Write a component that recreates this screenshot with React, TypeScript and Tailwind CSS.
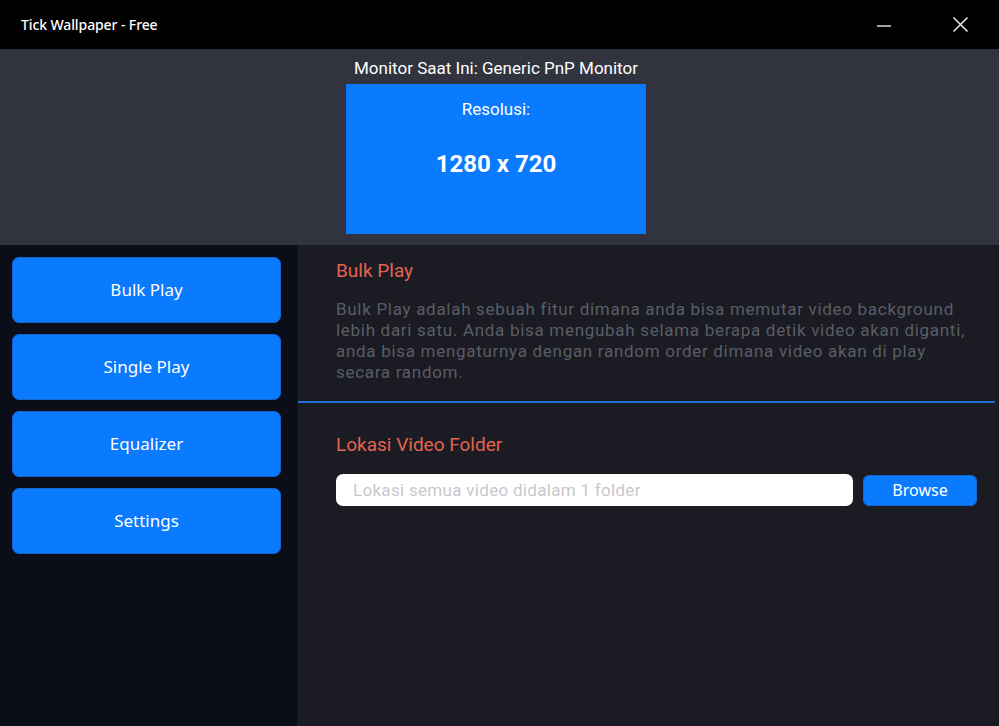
const menu = ["Bulk Play", "Single Play", "Equalizer", "Settings"];

const desc = [
  "Bulk Play adalah sebuah fitur dimana anda bisa memutar video background",
  "lebih dari satu. Anda bisa mengubah selama berapa detik video akan diganti,",
  "anda bisa mengaturnya dengan random order dimana video akan di play",
  "secara random.",
];

const App = () => {
  return (
    <div className="flex flex-col w-[999px] h-[726px] overflow-hidden bg-[#1a1b23] font-['Roboto',sans-serif]">
      <header className="flex items-center h-[49px] bg-black shrink-0">
        <span className="pl-[21px] text-[14px] font-medium text-white font-['Noto_Sans',sans-serif] tracking-[-0.1px]">
          Tick Wallpaper - Free
        </span>
        <div className="flex items-center ml-auto h-full mr-[1px]">
          <button className="flex items-center justify-center w-[76px] h-full">
            <svg width="16" height="16" viewBox="0 0 16 16">
              <path d="M1 9h14" stroke="#e5e5e5" strokeWidth="1.4" />
            </svg>
          </button>
          <button className="flex items-center justify-center w-[76px] h-full">
            <svg width="17" height="17" viewBox="0 0 17 17">
              <path d="M1.5 1.5l14 14M15.5 1.5l-14 14" stroke="#e5e5e5" strokeWidth="1.6" />
            </svg>
          </button>
        </div>
      </header>

      <section className="flex flex-col items-center h-[196px] pr-[7px] bg-[#31333f] shrink-0">
        <div className="pt-[9px] text-[17px] leading-[21px] text-white">
          Monitor Saat Ini: Generic PnP Monitor
        </div>
        <div className="flex flex-col items-center w-[300px] h-[150px] mt-[5px] bg-[#0a7aff]">
          <div className="pt-[15px] text-[17px] leading-[20px] text-white">Resolusi:</div>
          <div className="pt-[30px] text-[24px] leading-[30px] font-bold text-white">1280 x 720</div>
        </div>
      </section>

      <div className="flex flex-1">
        <aside className="flex flex-col gap-[11px] w-[298px] pl-[12px] pr-[16px] pt-[12px] bg-[#0b0d19] border-r border-[#15171f]">
          {menu.map((m) => (
            <button
              key={m}
              className="flex items-center justify-center h-[66px] rounded-[7px] bg-[#0a7aff] border border-[#1466cc] text-[17px] text-white font-['Noto_Sans',sans-serif]"
            >
              {m}
            </button>
          ))}
        </aside>

        <main className="flex flex-col flex-1">
          <div className="pl-[38px] pr-[10px] pt-[14px]">
            <h2 className="text-[19px] leading-[24px] text-[#e2644f]">Bulk Play</h2>
            <div className="mt-[16px] text-[17px] leading-[21px] tracking-[0.7px] text-[#5b5d66]">
              {desc.map((l) => (
                <div key={l} className="whitespace-nowrap">
                  {l}
                </div>
              ))}
            </div>
          </div>
          <div className="mt-[18px] mr-[4px] h-[2px] bg-[#1f6fd6]" />
          <div className="pl-[38px] pr-[22px] pt-[30px]">
            <h2 className="text-[19px] leading-[24px] text-[#e2644f]">Lokasi Video Folder</h2>
            <div className="flex items-center gap-[10px] mt-[17px]">
              <input
                placeholder="Lokasi semua video didalam 1 folder"
                className="flex-1 h-[32px] px-[17px] rounded-[7px] bg-white text-[17px] tracking-[0.3px] placeholder:text-[#c8c8cc] outline-none"
              />
              <button className="w-[114px] h-[31px] rounded-[6px] bg-[#0a7aff] border border-[#1466cc] text-[16px] text-white font-['Noto_Sans',sans-serif]">
                Browse
              </button>
            </div>
          </div>
        </main>
      </div>
    </div>
  );
};

export default App;
